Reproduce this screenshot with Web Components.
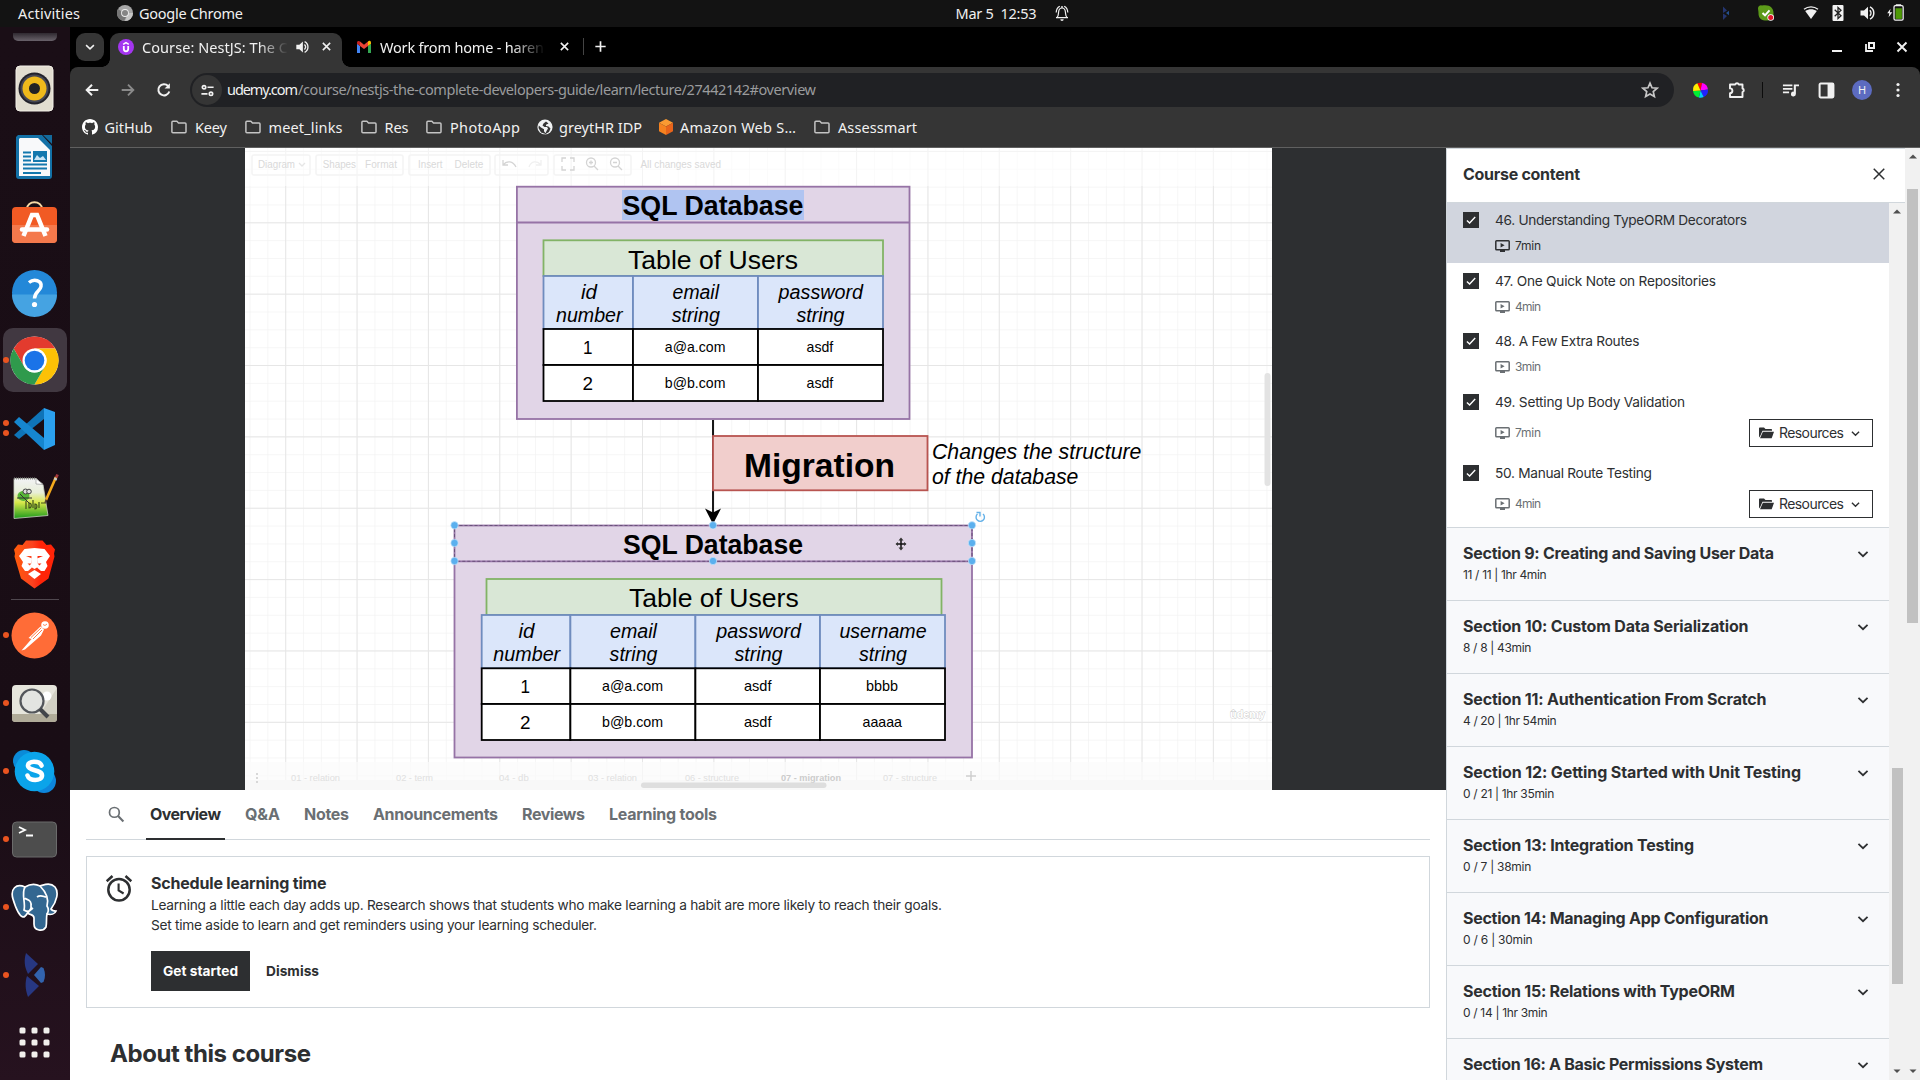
<!DOCTYPE html>
<html lang="en">
<head>
<meta charset="utf-8">
<title>Course: NestJS: The Complete Developer's Guide</title>
<style>
html,body{margin:0;height:100%;overflow:hidden;background:#000}
</style>
</head>
<body>
<desk-top></desk-top>
<script>
const UI = '"Noto Sans","Open Sans",sans-serif';
const PAGE = 'Inter,"Liberation Sans",sans-serif';

function component(tag, render, after) {
  customElements.define(tag, class extends HTMLElement {
    connectedCallback() {
      if (this.shadowRoot) return;
      const root = this.attachShadow({ mode: 'open' });
      const t = document.createElement('template');
      t.innerHTML = typeof render === 'function' ? render(this) : render;
      root.appendChild(t.content.cloneNode(true));
      if (after) after(this);
    }
  });
}

/* ---------- icons ---------- */
const S = 'fill="none" stroke="currentColor"';
const ICONS = {
  down: ['0 0 16 16', `<path ${S} stroke-width="2" d="M2.800 5.500 8 10.500l5.200-5"/>`],
  close: ['0 0 16 16', `<path ${S} stroke-width="1.9" d="M3.5 3.5l9 9m0-9l-9 9"/>`],
  thinclose: ['0 0 16 16', `<path ${S} stroke-width="1.7" d="M2 2l12 12m0-12L2 14"/>`],
  plus: ['0 0 16 16', `<path ${S} stroke-width="1.8" d="M8 2.5v11M2.5 8h11"/>`],
  udemy: ['0 0 16 16', `<circle cx="8" cy="8" r="8" fill="#a435f0"/><path d="M5.2 5.3 8 3.6l2.8 1.7" fill="none" stroke="#fff" stroke-width="1.5"/><path d="M5.8 7v3.1a2.2 2.2 0 0 0 4.4 0V7" fill="none" stroke="#fff" stroke-width="1.8"/>`],
  speaker: ['0 0 16 16', `<path fill="currentColor" d="M1.5 5.5v5H5l4 3.8V1.7L5 5.5z"/><path ${S} stroke-width="1.5" d="M10.8 5.2a4 4 0 0 1 0 5.6M11 1.9a6.8 6.8 0 0 1 0 12.2"/>`],
  gmail: ['0 0 16 16', `<path fill="#4285f4" d="M1 14h3V7L1 4.8z"/><path fill="#34a853" d="M12 14h3V4.8L12 7z"/><path fill="#fbbc04" d="M12 3v4l3-2.2V3.6c0-1.6-1.8-2.3-3-1.2z"/><path fill="#ea4335" d="M4 7V2.6l4 3.1 4-3.1V7l-4 3z"/><path fill="#c5221f" d="M1 3.6v1.2L4 7V2.6C2.800 1.400 1 2 1 3.600z"/>`],
  back: ['0 0 16 16', `<path ${S} stroke-width="2" d="M14.300 8H3M8 2.700 2.700 8 8 13.300"/>`],
  fwd: ['0 0 16 16', `<path ${S} stroke-width="1.900" d="M1.700 8H13M8 2.700 13.300 8 8 13.300"/>`],
  reload: ['0 0 16 16', `<path ${S} stroke-width="2" d="M13.300 9.500A5.600 5.600 0 1 1 12.100 4"/><path fill="currentColor" d="M13.900 1.200v5.300H8.600z"/>`],
  tune: ['0 0 16 16', `<g ${S} stroke-width="1.800"><circle cx="4.300" cy="4.500" r="1.800"/><path d="M8 4.500h6.500M1.500 11.500H8"/><circle cx="11.700" cy="11.500" r="1.800"/></g>`],
  star: ['0 0 16 16', `<path ${S} stroke-width="1.500" d="M8 1.900l1.800 4.100 4.500.4-3.400 3 1 4.400L8 11.500l-3.900 2.300 1-4.400-3.400-3 4.500-.4z"/>`],
  puzzle: ['0 0 18 18', `<path ${S} stroke-width="1.900" stroke-linejoin="round" d="M2 3.500h5.200a1.900 1.900 0 0 1 3.600 0H14.500V7.500a1.900 1.900 0 0 1 0 3.600V16H2v-3.800a2.400 2.400 0 0 0 0-4.800z"/>`],
  queue: ['0 0 18 18', `<path ${S} stroke-width="1.900" d="M1 3.500h10M1 7.300h10M1 11h6.500"/><path fill="currentColor" d="M12.500 2.600H18v2h-3.300v8.200a2.600 2.600 0 1 1-2.200-2.600z"/>`],
  panel: ['0 0 16 16', `<rect x="1.500" y="1.500" width="13" height="13" rx="1" ${S} stroke-width="1.900"/><path fill="currentColor" d="M9 1.500h5.500v13H9z"/>`],
  more: ['0 0 16 16', `<g fill="currentColor"><circle cx="8" cy="2.500" r="1.600"/><circle cx="8" cy="8" r="1.600"/><circle cx="8" cy="13.500" r="1.600"/></g>`],
  folder: ['0 0 16 16', `<path ${S} stroke-width="1.500" stroke-linejoin="round" d="M.9 3.300c0-.6.3-1 1-1h4L7.500 4H14c.7 0 1 .4 1 1v7.700c0 .6-.4 1-1 1H1.900c-.7 0-1-.4-1-1z"/>`],
  github: ['0 0 16 16', `<path fill="currentColor" d="M8 0C3.580 0 0 3.580 0 8c0 3.540 2.290 6.530 5.470 7.590.4.070.55-.17.55-.38 0-.19-.01-.82-.01-1.490-2.010.37-2.530-.49-2.690-.94-.09-.23-.48-.94-.82-1.130-.28-.15-.68-.52-.01-.53.63-.01 1.080.58 1.230.82.72 1.210 1.870.87 2.330.66.070-.52.28-.87.51-1.070-1.780-.2-3.640-.89-3.640-3.950 0-.87.31-1.590.82-2.150-.08-.2-.36-1.020.08-2.120 0 0 .67-.21 2.200.82.64-.18 1.320-.27 2-.27s1.360.09 2 .27c1.530-1.040 2.200-.82 2.200-.82.44 1.100.16 1.920.08 2.120.51.56.82 1.270.82 2.150 0 3.070-1.870 3.750-3.650 3.950.29.25.54.73.54 1.480 0 1.070-.01 1.930-.01 2.200 0 .21.15.46.55.38A8.010 8.010 0 0 0 16 8c0-4.420-3.580-8-8-8z"/>`],
  globe: ['0 0 16 16', `<circle cx="8" cy="8" r="7.600" fill="#f1f3f4"/><path fill="#353535" d="M9 2.500 6.500 4.500l-1 2 2 1.500h2.500l1 1.500-1.500 2.500-1 2.300-1.500-2v-2L4 8.500 1.800 6.500 1.500 9l2.500 4.500 4 1.300L7 16l5-3 1.500-3.500-2-2-2.500-.5V5.800l2.500-1.300z"/>`],
  cube: ['0 0 16 16', `<path fill="#fa9a32" d="M8 0l7 3.700L8 7.500 1 3.700z"/><path fill="#f58220" d="M1 3.700l7 3.800V16l-7-3.800z"/><path fill="#e8641b" d="M15 3.700 8 7.500V16l7-3.800z"/>`],
  bell: ['0 0 16 16', `<path ${S} stroke-width="1.200" d="M3 12.500c1.500-1.500 1.300-3 1.600-5.500C4.800 4.700 6.200 3 8 3s3.200 1.700 3.400 4c.3 2.500.1 4 1.600 5.500M2.200 7.500C2.300 5 3.500 2.300 5.800 1.200M13.800 7.500c-.1-2.500-1.300-5.200-3.600-6.300"/><path fill="currentColor" d="M2 12h12v1.300H2zM6.300 14.200h3.400a1.700 1.700 0 0 1-3.400 0zM7.300 1h1.400v2H7.300z"/>`],
  chromegrey: ['0 0 16 16', `<circle cx="8" cy="8" r="8" fill="#a6a6a6"/><path d="M1 4a8 8 0 0 0 6 12l3-6z" fill="#767676"/><path d="M16 8a8 8 0 0 1-8 8l3.500-8z" fill="#c6c6c6"/><circle cx="8" cy="8" r="3.900" fill="#eee"/><circle cx="8" cy="8" r="3" fill="#858585"/>`],
  kitesmall: ['0 0 16 16', `<path fill="#24356f" d="M5 1.500 9 5.500 5 8zM5 8.500 9 11 5 15z"/><path fill="#24508f" d="M8 8l3-2.300v4.600z"/>`],
  skypeok: ['0 0 16 16', `<path d="M0 3a3 3 0 0 1 4-2.500C12-1 16 3 15.500 9.500 15 14 11 16 7 15.500 2 15 .5 12 .5 8 .5 6 0 5 0 3z" fill="#5c9a19"/><path d="M4.500 8l2.500 2.300 4.500-5" fill="none" stroke="#fff" stroke-width="2"/><circle cx="12.700" cy="12.500" r="3.300" fill="#fff"/><circle cx="12.700" cy="12.500" r="2.500" fill="#e0162b"/>`],
  wifi: ['0 0 16 16', `<path ${S} stroke-width="1.300" d="M1 4.200c4-3.200 10-3.200 14 0"/><path fill="currentColor" d="M2.200 6C6 3.600 10 3.600 13.800 6L8 14z"/>`],
  bt: ['0 0 12 16', `<rect x=".5" width="11" height="16" rx="1" fill="#f2f2f2"/><path fill="none" stroke="#222" stroke-width="1.300" d="M2.700 4.800l6.300 6L6 13.500v-11L9 5.200l-6.300 6"/>`],
  battery: ['0 0 16 16', `<path fill="#f2f2f2" d="M3.300 4.500.2 8.800h2L1.500 12.400 5 7.700H2.700zM8.300.2h5v1.500h-5z"/><rect x="6.600" y="1.600" width="8.600" height="13.600" rx="1.300" fill="none" stroke="#f2f2f2" stroke-width="1.200"/><path fill="#4e9a06" d="M8 4h6v10H8z"/>`],
  min: ['0 0 16 16', `<path fill="currentColor" d="M3 11h10v2H3z"/>`],
  restore: ['0 0 16 16', `<path ${S} stroke-width="2" d="M7 4h5v5H7z"/><path ${S} stroke-width="1.800" d="M4 5v7h7"/>`],
  wheel: ['0 0 16 16', `<path fill="#f00" d="M8 8 5 1.200A7 7 0 0 1 9.500 1z"/><path fill="#f0f" d="M8 8 9.500 1a7 7 0 0 1 5.500 6z"/><path fill="#22f" d="M8 8l7-1a7 7 0 0 1-4 7.200z"/><path fill="#0cf" d="M8 8l3 6.200a7 7 0 0 1-4.500.500z"/><path fill="#0e3" d="M8 8l-1.500 6.700A7 7 0 0 1 1 8.500z"/><path fill="#fe0" d="M8 8l-7 .5a7 7 0 0 1 4-7.300z"/>`],
  search: ['0 0 16 16', `<circle cx="6" cy="6" r="4.600" ${S} stroke-width="1.600"/><path ${S} stroke-width="2" d="M9.500 9.500l5 5"/>`],
  alarm: ['0 0 28 28', `<g ${S} stroke-width="2.500"><circle cx="14" cy="15.700" r="10.700"/><path d="M1.700 7.200 7.500 2M26.300 7.200 20.500 2"/><path stroke-width="2.100" d="M13.600 9.500v7l5 3"/></g>`],
  check: ['0 0 16 16', `<path fill="#2d2f31" d="M0 0h16v16H0z"/><path fill="none" stroke="#fff" stroke-width="1.400" d="M3.900 8.500l2.700 2.500 5.600-6"/>`],
  video: ['0 0 15 12', `<rect x=".8" y=".8" width="13.400" height="9" rx=".8" ${S} stroke-width="1.500"/><path fill="currentColor" d="M5.600 3v4.600l4-2.300zM5 10h5v2H5z"/>`],
  open: ['0 0 15 12', `<path fill="currentColor" d="M0 1.500C0 .8.500.5 1 .5h4L6.500 2H12c.7 0 1 .3 1 1v.7H3.500L1.200 9 0 10.500z"/><path fill="currentColor" d="M3.900 4.700H15L12.700 11.300H1z"/>`],
};
component('svg-icon', el => {
  const [vb, body] = ICONS[el.getAttribute('name')];
  const w = el.getAttribute('w') || 16, h = el.getAttribute('h') || w;
  return `<style>:host{display:block;flex:none;width:${w}px;height:${h}px}svg{display:block}</style><svg width="${w}" height="${h}" viewBox="${vb}">${body}</svg>`;
});

/* ---------- GNOME top bar ---------- */
component('top-bar', `<style>
:host{display:flex;height:27px;background:#131313;color:#f0f0f0;font:14.500px/24px ${UI};align-items:center;padding:0 16px 2px 18px;box-sizing:border-box}
.l,.c,.r{display:flex;align-items:center}
.l{width:937.500px;gap:0}.l svg-icon{margin:0 6px 0 37px}
.c{gap:17px}.r{flex:1;justify-content:flex-end}
</style>
<div class="l"><fit-text w="62">Activities</fit-text><svg-icon name="chromegrey"></svg-icon><fit-text w="104">Google Chrome</fit-text></div>
<div class="c"><fit-text w="81">Mar 5  12:53</fit-text><svg-icon name="bell"></svg-icon></div>
<div class="r"><svg-icon name="kitesmall" style="margin-right:24px"></svg-icon><svg-icon name="skypeok" style="margin-right:29px"></svg-icon><svg-icon name="wifi" style="margin-right:13px"></svg-icon><svg-icon name="bt" w="12" h="16" style="margin-right:15px"></svg-icon><svg-icon name="speaker" style="margin-right:12px"></svg-icon><svg-icon name="battery" w="17"></svg-icon></div>`);

/* ---------- dock ---------- */
const DOCK = {
  speaker: `<rect x="6" y="2" width="37" height="45" rx="4" fill="#e2ddd0" stroke="#f3f0e8"/><circle cx="24.500" cy="24.500" r="16" fill="#23222b"/><circle cx="24.500" cy="24.500" r="14" fill="#464754"/><circle cx="24.500" cy="24.500" r="12" fill="#efb91b"/><circle cx="24.500" cy="24.500" r="5.500" fill="#202124"/>`,
  writer: `<path d="M8 3h24l10 11v30a3 3 0 0 1-3 3H9a3 3 0 0 1-3-3V5z" fill="#1371a7"/><path d="M10 6h18l12 12v26H9V7z" fill="#f8f9fa"/><path d="M33 3h9v9z" fill="#136a9c"/><path d="M13 20.500h8M13 24.500h8M13 28.500h8M13 32.500h24M13 36.500h24M13 41h18" stroke="#1378ad" stroke-width="2"/><path d="M23 19h14v11H23z" fill="#1378ad"/><path d="M24 28l3-5 3 3 3-2 3 4z" fill="#c9e5f5"/>`,
  software: `<path d="M17 9c0-9 15-9 15 0" fill="none" stroke="#f7d8a5" stroke-width="2"/><rect x="2" y="7" width="45" height="36" rx="4" fill="#f15a24"/><path d="M2 25h45v14a4 4 0 0 1-4 4H6a4 4 0 0 1-4-4z" fill="#f4794c"/><path d="M13.500 36 22 15h5l8.500 21" fill="none" stroke="#fff" stroke-width="4.500"/><path d="M12 29.500h25" stroke="#fff" stroke-width="4.500" stroke-linecap="round"/>`,
  help: `<circle cx="24.500" cy="24.500" r="22.500" fill="#2388d8"/><path d="M2 26.500a22.500 22.500 0 0 0 45 0z" fill="#45a3e2"/><path d="M19 14.500c5-4 13-2 12 4-.6 4.500-6.500 5-6.500 12" fill="none" stroke="#fff" stroke-width="3.500"/><circle cx="24.500" cy="36.500" r="2.600" fill="#fff"/>`,
  chrome: `<circle cx="24.500" cy="24.500" r="24" fill="#fff"/><path d="M3.700 12.500a24 24 0 0 1 41.600 0H24.500L14 30.500z" fill="#e33b2e"/><path d="M45.300 12.500a24 24 0 0 1-20.800 36l10.400-18a12 12 0 0 0-10.400-18z" fill="#fcc106"/><path d="M3.700 12.500a24 24 0 0 0 20.800 36l10.400-18a12 12 0 0 1-20.800 0z" fill="#2f9a4c"/><circle cx="24.500" cy="24.500" r="12" fill="#fff"/><circle cx="24.500" cy="24.500" r="9.800" fill="#1a73e8"/>`,
  vscode: `<path d="M34 4 4 31l5 4L34 15z" fill="#0f74b8"/><path d="M34 46 4 18l5-5 25 21z" fill="#1686cf"/><path d="M34 4l11 4v33l-11 5z" fill="#2ba0ee"/>`,
  notepad: `<defs><linearGradient id="g" x2="0" y2="1"><stop stop-color="#f2f2f5"/><stop offset=".35" stop-color="#e8eed8"/><stop offset=".6" stop-color="#d8e84a"/><stop offset="1" stop-color="#1c9a1c"/></linearGradient></defs><path d="M4 6.500h22l7 6 5 31L4 46.500z" fill="url(#g)" stroke="#c9d0c0" stroke-width=".8"/><path d="M4 6.500h22" stroke="#888" stroke-width="2" stroke-dasharray="1 1"/><path d="M26 6.500v5.500l7 .5z" fill="#fff" stroke="#888" stroke-width=".6"/><ellipse cx="13.500" cy="24" rx="6" ry="5" fill="#56b637"/><circle cx="15.500" cy="19.500" r="2.500" fill="#ddd" stroke="#444"/><circle cx="19" cy="19.500" r="2.300" fill="#ddd" stroke="#444"/><path d="M7 26h15M10 22l9 9" stroke="#333" stroke-width="1" fill="none"/><path d="M16 29v8M19 31c3 0 3 5 0 5zM23 28v8M25 32c3 0 2 5 0 5zM29 30v6M31 31h5" stroke="#41511d" stroke-width="1.200" fill="none"/><path d="M46 5 36 28" stroke="#f4a91c" stroke-width="2.600"/><path d="M47.500 2.500 46.300 5.500" stroke="#a3383d" stroke-width="2.800"/><path d="M46 6l-1 2" stroke="#ccc" stroke-width="3"/><path d="M36 27.500l-1 3.500" stroke="#5a4632" stroke-width="1.300"/>`,
  brave: `<defs><linearGradient id="b"><stop stop-color="#ff5c0a"/><stop offset=".45" stop-color="#fb4220"/><stop offset=".65" stop-color="#ff2408"/></linearGradient></defs><path d="M16 .5h16.500l4 4.500 4.500-.5 4 5-1 4 .5 3-6 22L24.500 48.500 11 38.500 4.500 16.500 5 13.500l-1-4 4-5 4.500.5z" fill="url(#b)"/><path d="M14.500 9 24.500 8l10 1 5.500 7-4 6 1.500 4-3 5h-3.500l-4-3.500 4.500-4h-4l-.5-5 6-2.500-5.500 0-3 1.500-3-1.500h-5.500l6 2.500-.5 5h-4l4.500 4-4 3.500H15l-3.500-5L13 22l-4-6z" fill="#fff"/><path d="M21.500 16h6v7l2 3-5 3-5-3 2-3z" fill="#fff"/><path d="M24.500 30l6.500 4-6.500 5-6.500-5z" fill="#fff"/>`,
  postman: `<circle cx="24.500" cy="24.500" r="23" fill="#ff6c37"/><circle cx="35" cy="14" r="3.800" fill="#fff"/><path d="M30.500 15.500 18.500 27l3 1-10 11.500 3.500-1L31 24.500l3-6z" fill="#fff"/><path d="M21 26.500 31 17M23 28l9-9" stroke="#ff6c37" stroke-width=".9"/><path d="M33 13.500l2 1 2-1.500" stroke="#ff6c37" stroke-width=".8" fill="none"/>`,
  viewer: `<rect x="2" y="6" width="45" height="37" rx="4" fill="#e6e5dc"/><path d="M2 35h45v5a3 3 0 0 1-3 3H5a3 3 0 0 1-3-3z" fill="#b0ab99"/><path d="M47 9 30 35h17z" fill="#d2d0c4"/><circle cx="37" cy="17" r="4.500" fill="#fff"/><circle cx="22" cy="22" r="11.500" fill="#e3e4e1" stroke="#53565b" stroke-width="2.200"/><path d="M30 30l8 8" stroke="#42454a" stroke-width="4"/>`,
  skype: `<circle cx="14" cy="14" r="11" fill="#0b8bd8"/><circle cx="34" cy="34" r="12" fill="#0d86dc"/><circle cx="24.500" cy="24.500" r="19.800" fill="#0ba4ea"/><path d="M31.500 18.500c-2-5-14-5-13.500.5.500 5 14 3.500 14 9.500s-13 6-14.500 0" fill="none" stroke="#fff" stroke-width="4.600" stroke-linecap="round"/>`,
  terminal: `<rect x="2.500" y="7" width="44" height="35" rx="4" fill="#4d4d4d" stroke="#6b6b6b"/><path d="M9 12l6 3-6 3M16 20.500h7" fill="none" stroke="#fff" stroke-width="1.800"/>`,
  postgres: `<path d="M15 4C6 0 0 6 3 16c3 10 6 17 10 18 2 0 4-3 5-5l1 2c3 1 5 1 5 4v6c0 7 9 8 12 3 1-4 0-9 1-13 4 1 8 0 9-3-2 0-4 0-5-2 6-8 8-17 4-22-5-5-11-2-15-1-4-2-10-2-15 1z" fill="#336791" stroke="#fff" stroke-width="1.700"/><path d="M15 4c-4 7 1 16-1 23 4 3 8 0 7-4 1-7-5-6-6-8M30 3c6 6 9 13 7 20 2 3 2 5 0 8M27 14c4-3 7 0 9 0M18 29l5-4" fill="none" stroke="#fff" stroke-width="1.700"/>`,
  kite: `<path d="M16 2 28 13 18 23c-4-8-4-14-2-21z" fill="#273782"/><path d="M17 25 29 35 18 46c-3-8-3-15-1-21z" fill="#273782"/><path d="M24 24l7-8 2.500 1c2 5 2 9 0 14L31 32z" fill="#3263ad"/>`,
  apps: `<g fill="#f0efec">${[9.5,21.5,33.5].map(y => [9.5,21.5,33.5].map(x => `<rect x="${x}" y="${y}" width="6" height="6" rx="1.500"/>`).join('')).join('')}</g>`
};
component('dock-item', el => {
  const dots = +el.getAttribute('dots') || 0;
  return `<style>
:host{display:flex;position:relative;height:68px;align-items:center;justify-content:center}
div{width:64px;height:64px;border-radius:10px;display:flex;align-items:center;justify-content:center;${el.hasAttribute('active') ? 'background:#413841' : ''}}
svg{margin-right:1px}
p{position:absolute;left:3px;top:0;height:68px;margin:0;display:flex;flex-direction:column;justify-content:center;gap:3.500px}
i{width:6px;height:6px;border-radius:50%;background:#e95420}</style>
<div><svg width="49" height="49" viewBox="0 0 49 49">${DOCK[el.getAttribute('name')]}</svg></div><p>${'<i></i>'.repeat(dots)}</p>`;
});
component('side-dock', `<style>
:host{display:flex;flex-direction:column;width:70px;flex:none;background:linear-gradient(#1a0e16 0,#190d15 70%,#26121f 100%)}
.cut{height:27px;padding:6px 13px 0;box-sizing:border-box}.cut b{display:block;height:8px;background:linear-gradient(#2f2930,#69626a);border-radius:0 0 5px 5px}
hr{width:48px;height:1px;border:0;margin:1px auto 1px;background:#50484f}
</style><div class="cut"><b></b></div>
<dock-item name="speaker"></dock-item><dock-item name="writer"></dock-item><dock-item name="software"></dock-item><dock-item name="help"></dock-item><dock-item name="chrome" active dots="1"></dock-item><dock-item name="vscode" dots="2"></dock-item><dock-item name="notepad"></dock-item><dock-item name="brave"></dock-item><hr>
<dock-item name="postman" dots="1"></dock-item><dock-item name="viewer" dots="1"></dock-item><dock-item name="skype" dots="1"></dock-item><dock-item name="terminal" dots="1"></dock-item><dock-item name="postgres" dots="1"></dock-item><dock-item name="kite" dots="1"></dock-item><dock-item name="apps" style="height:66px"></dock-item>`);

/* ---------- browser chrome ---------- */
component('tab-strip', `<style>
:host{display:flex;height:40px;background:#000;color:#f1f1f1;font:14.500px/24px ${UI};padding:0 10px 0 6px;box-sizing:border-box;align-items:center}
.menu{width:28px;height:28px;border-radius:9px;background:#353535;display:grid;place-items:center}
.tab{display:flex;align-items:center;height:34px;margin-top:6px;box-sizing:border-box;padding-bottom:7px}
.on{width:232px;margin-left:6px;padding-left:8px;background:#353535;border-radius:9px 9px 0 0;position:relative}
.on::before,.on::after{content:"";position:absolute;bottom:0;width:8px;height:8px;background:radial-gradient(circle at 0 0,#0000 7.500px,#353535 8px)}
.on::before{left:-8px}.on::after{right:-8px;background:radial-gradient(circle at 100% 0,#0000 7.500px,#353535 8px)}
.t{overflow:hidden;white-space:nowrap;-webkit-mask:linear-gradient(90deg,#000 80%,#0000);mask:linear-gradient(90deg,#000 80%,#0000);margin-left:8px}
.off{padding-left:14px}.sep{width:1px;height:17px;background:#444;margin:0 9px 0 12px}
.win{margin-left:auto;display:flex;gap:16.500px}
</style>
<div class="menu"><svg-icon name="down" w="12"></svg-icon></div>
<div class="tab on"><svg-icon name="udemy"></svg-icon><div class="t" style="width:146px"><fit-text w="146">Course: NestJS: The C</fit-text></div><svg-icon name="speaker" w="14" style="margin-left:7px"></svg-icon><svg-icon name="close" w="13" style="margin-left:10.500px"></svg-icon></div>
<div class="tab off"><svg-icon name="gmail" w="16"></svg-icon><div class="t" style="width:165px"><fit-text w="164">Work from home - haren</fit-text></div><svg-icon name="close" w="13" style="margin-left:12.500px"></svg-icon><span class="sep"></span><svg-icon name="plus" w="15"></svg-icon></div>
<div class="win"><svg-icon name="min"></svg-icon><svg-icon name="restore"></svg-icon><svg-icon name="close"></svg-icon></div>`);

component('nav-bar', `<style>
:host{display:flex;height:46px;box-sizing:border-box;align-items:center;background:#353535;color:#f1f1f1;border-radius:8px 8px 0 0;padding:0 14px;font:14.500px/32px ${UI}}
.box{flex:none;width:1484px;height:34px;margin-left:18px;border-radius:17px;background:#202124;display:flex;align-items:center;padding:0 15px 0 2px;box-sizing:border-box}
.c{width:30px;height:30px;border-radius:50%;background:#353535;display:grid;place-items:center;margin-right:5px}
.path{color:#9a9b9d}.box svg-icon[name=star]{margin-left:auto;color:#c7c7c7}
.box fit-text{margin-bottom:2px}
.sep{width:2px;height:16px;background:#0c0c0c;margin:0 19px 0 16px}
.av{width:20px;height:20px;border-radius:50%;background:#5c6bc0;font:11px/20px ${UI};text-align:center;margin:0 26px 0 26px;flex:none}
</style>
<svg-icon name="back"></svg-icon><svg-icon name="fwd" style="margin-left:20px;color:#8a8a8a"></svg-icon><svg-icon name="reload" style="margin-left:20px"></svg-icon>
<div class="box"><div class="c"><svg-icon name="tune" w="15"></svg-icon></div><fit-text w="71">udemy.com</fit-text><fit-text w="518" class="path">/course/nestjs-the-complete-developers-guide/learn/lecture/27442142#overview</fit-text><svg-icon name="star" w="18"></svg-icon></div>
<svg-icon name="wheel" w="17" style="margin-left:17.500px"></svg-icon><svg-icon name="puzzle" w="18" style="margin-left:19px"></svg-icon><span class="sep"></span><svg-icon name="queue" w="17"></svg-icon><svg-icon name="panel" w="17" style="margin-left:19px"></svg-icon><div class="av" style="margin-left:17px;margin-right:18px">H</div><svg-icon name="more" w="16"></svg-icon>`);

component('book-mark', el => `<style>:host{display:flex;align-items:center;color:#f1f1f1;font:14.500px/24px ${UI};margin-right:${el.getAttribute('gap')}px}svg-icon{color:#c4c4c4;margin-right:${el.getAttribute('pad') || 8}px}svg-icon[name=github]{color:#fff}</style><svg-icon name="${el.getAttribute('icon') || 'folder'}" w="16"></svg-icon><fit-text w="${el.getAttribute('w')}">${el.getAttribute('label')}</fit-text>`);
component('bookmark-bar', `<style>:host{display:flex;height:35px;box-sizing:border-box;align-items:center;background:#353535;border-bottom:1px solid #606060;padding:0 0 7px 12px}</style>
<book-mark icon="github" label="GitHub" w="48" pad="6.500" gap="18.500"></book-mark><book-mark label="Keey" w="32" gap="17.500"></book-mark><book-mark label="meet_links" w="74" gap="18"></book-mark><book-mark label="Res" w="24" gap="17.500"></book-mark><book-mark label="PhotoApp" w="70" gap="16.500"></book-mark><book-mark icon="globe" label="greytHR IDP" w="83" pad="6.500" gap="15.500"></book-mark><book-mark icon="cube" label="Amazon Web S…" w="116" pad="6.500" gap="18"></book-mark><book-mark label="Assessmart" w="79" gap="0"></book-mark>`);

/* ---------- diagram shown in the video ---------- */
const tx = (x1, x2, y, size, s, extra = '') => `<text x="${x1}" y="${y}" font-size="${size}" textLength="${(x2 - x1).toFixed(1)}" lengthAdjust="spacingAndGlyphs" ${extra}>${s}</text>`;
const box = (x1, y1, x2, y2, fill, stroke, w = 1.800) => `<rect x="${x1}" y="${y1}" width="${x2 - x1}" height="${y2 - y1}" fill="${fill}" stroke="${stroke}" stroke-width="${w}"/>`;
const grid = (cols, y1, y2, fill, stroke) => cols.slice(1).map((c, i) => box(cols[i], y1, c, y2, fill, stroke)).join('');
const IT = 'font-style="italic"', BD = 'font-weight="bold"';
component('lecture-video', () => {
  const a = [543.500, 633, 758, 883], b = [481.700, 570.400, 695.400, 820, 945];
  const P = '#e1d5e7', PS = '#9673a6', HB = '#dbe6fa', HS = '#6f8cbe', K = '#000';
  const faint = 'fill="#d9d9d9"', tabs = 'fill="#e0e0e0"';
  return `<style>:host{display:flex;height:642px;background:#2d2f31;padding-left:175px;box-sizing:border-box}svg{display:block;flex:none}</style>
<svg width="1027" height="642" viewBox="245 148 1027 642" font-family="'Liberation Sans',Arial,sans-serif">
<defs>
<pattern id="mi" width="17.840" height="17.840" patternUnits="userSpaceOnUse" x="285.200" y="222.300"><path d="M0 0H17.840M0 0V17.840" stroke="#f3f3f3" stroke-width="1.500" fill="none"/></pattern>
<pattern id="ma" width="71.360" height="71.360" patternUnits="userSpaceOnUse" x="285.200" y="222.300"><path d="M0 0H71.360M0 0V71.360" stroke="#e6e6e6" stroke-width="2" fill="none"/></pattern>
</defs>
<path d="M245 148h1027v642H245z" fill="#fff"/><path d="M245 148h1027v634H245z" fill="url(#mi)"/><path d="M245 148h1027v634H245z" fill="url(#ma)"/>
<path d="M245 148h1027v38H245z" fill="#fff" opacity=".55"/><path d="M245 762h1027v28H245z" fill="#fbfbfb" opacity=".7"/><path d="M245 780h1027v10H245z" fill="#f8f8f8"/>
<g fill="none" stroke="#f4f4f4" stroke-width="1.500"><rect x="252" y="155" width="58" height="20" rx="2"/><rect x="316" y="155" width="87" height="20" rx="2"/><rect x="409" y="155" width="81" height="20" rx="2"/><rect x="495" y="155" width="53" height="20" rx="2"/><rect x="554" y="155" width="77" height="20" rx="2"/></g>
${tx(258, 295, 167.500, 10, 'Diagram', faint)}${tx(322.700, 356, 167.500, 10, 'Shapes', faint)}${tx(365, 397, 167.500, 10, 'Format', faint)}${tx(418, 442.500, 167.500, 10, 'Insert', faint)}${tx(454.400, 483.400, 167.500, 10, 'Delete', faint)}${tx(640.400, 721, 168, 10, 'All changes saved', faint)}
<g fill="none" stroke="#d4d4d4" stroke-width="1.300"><path d="M299 163l3 3 3-3" stroke="#e6e6e6"/><path d="M503 160v5h5M503 165c4-5 10-4 13 2"/><path stroke="#f0f0f0" d="M541 160v5h-5M541 165c-4-5-10-4-12 2"/><path d="M562 162v-4h4M570 158h4v4M574 166v4h-4M566 170h-4v-4"/><circle cx="591" cy="162.500" r="4.500"/><path d="M594 166l4 4M589 162.500h4M591 160.500v4"/><circle cx="615" cy="162.500" r="4.500"/><path d="M618 166l4 4M613 162.500h4"/></g>
${box(516.900, 186.700, 909.500, 419, P, PS)}<path d="M516.900 222.500H909.500" stroke="${PS}" stroke-width="1.800"/>
<path d="M622 190h182v30H622z" fill="#b0c4f1"/>
${tx(622.500, 803.500, 215, 27, 'SQL Database', BD)}
${box(543.500, 240.300, 883, 276, '#d9e7d6', '#82b366')}${tx(628, 798, 268.700, 26, 'Table of Users')}
${grid(a, 276, 329, HB, HS)}${grid(a, 329, 365, '#fff', K)}${grid(a, 365, 401, '#fff', K)}
${tx(581, 597, 299, 20.500, 'id', IT)}${tx(556, 622.500, 322, 20.500, 'number', IT)}${tx(672.600, 719, 299, 20.500, 'email', IT)}${tx(671.700, 720, 322, 20.500, 'string', IT)}${tx(778.600, 863, 299, 20.500, 'password', IT)}${tx(796.500, 844.500, 322, 20.500, 'string', IT)}
${tx(583, 592.500, 354, 18, '1')}${tx(582.500, 593, 389.500, 18, '2')}
${tx(664.800, 725.400, 352.300, 14.500, 'a@a.com')}${tx(664.800, 725.400, 388, 14.500, 'b@b.com')}${tx(806.600, 833.300, 352.300, 14.500, 'asdf')}${tx(806.600, 833.300, 388, 14.500, 'asdf')}
<path d="M713 420V514" stroke="#000" stroke-width="1.800"/><path d="M713 524l-8-15.500 8 4 8-4z"/>
${box(713, 436, 927.500, 490.300, '#f1cecc', '#b85450')}${tx(744, 895, 476.700, 33, 'Migration', BD)}
${tx(932, 1141.400, 459.300, 21.500, 'Changes the structure', IT)}${tx(932, 1078.400, 484, 21.500, 'of the database', IT)}
${box(454.500, 525.500, 972, 757.500, P, PS)}<path d="M454.500 561.300H972" stroke="${PS}" stroke-width="1.800"/>
<path d="M454.500 525.500H972V561.300H454.500z" fill="none" stroke="#69537a" stroke-dasharray="3 2"/>
${tx(623, 803, 553.700, 27, 'SQL Database', BD)}
${box(486.500, 579, 941.500, 615, '#d9e7d6', '#82b366')}${tx(629, 798.700, 607, 26, 'Table of Users')}
${grid(b, 615, 668.300, HB, HS)}${grid(b, 668.300, 704, '#fff', K)}${grid(b, 704, 740, '#fff', K)}
${tx(518.500, 534.500, 637.700, 20.500, 'id', IT)}${tx(493.300, 560.200, 660.700, 20.500, 'number', IT)}${tx(610, 657, 637.700, 20.500, 'email', IT)}${tx(609.600, 657.500, 660.700, 20.500, 'string', IT)}${tx(716.300, 801, 637.700, 20.500, 'password', IT)}${tx(734.500, 782.500, 660.700, 20.500, 'string', IT)}${tx(839.400, 926.600, 637.700, 20.500, 'username', IT)}${tx(859, 907, 660.700, 20.500, 'string', IT)}
${tx(520.500, 530, 692.700, 18, '1')}${tx(520, 530.500, 728.500, 18, '2')}
${[['a@a.com', 'asdf', 691.3], ['b@b.com', 'asdf', 727.3]].map(r => tx(602, 663, r[2], 14.5, r[0]) + tx(744, 771.5, r[2], 14.5, r[1])).join('')}${tx(866, 898, 691.300, 14.500, 'bbbb')}${tx(862.500, 902, 727.300, 14.500, 'aaaaa')}
<g fill="#5bb0ee" stroke="#d5ecfb" stroke-width=".6">${[[454.5,525.3],[713,525.3],[972,525.3],[454.5,543],[972,543],[454.5,561],[713,561],[972,561]].map(p => `<circle cx="${p[0]}" cy="${p[1]}" r="3.700"/>`).join('')}</g>
<path d="M977.500 514a4.200 4.200 0 1 0 5.500 0M976.500 512.500h3.500v4" fill="none" stroke="#64b1e8" stroke-width="1.400"/>
<path d="M901 539v10M896.500 544h9" stroke="#111" stroke-width="1.500"/><path d="M901 537.500l2.500 3h-5zM901 550.500l2.500-3h-5zM895.500 544l2.500-2v4zM906.500 544l-2.500-2v4z" fill="#333"/>
<text x="1230" y="718" font-size="11.500" textLength="35" lengthAdjust="spacingAndGlyphs" fill="#fff" stroke="#c4c4c4" stroke-width=".8" paint-order="stroke" font-weight="bold">ûdemy</text>
<rect x="1264.500" y="373" width="6" height="113" rx="3" fill="#e3e3e3"/>
<g>${tx(291, 340, 780.500, 9.500, '01 - relation', tabs)}${tx(396, 433, 780.500, 9.500, '02 - term', tabs)}${tx(499, 528.700, 780.500, 9.500, '04 - db', tabs)}${tx(588, 637, 780.500, 9.500, '03 - relation', tabs)}${tx(685, 739, 780.500, 9.500, '06 - structure', tabs)}${tx(781, 841, 780.500, 9.500, '07 - migration', 'fill="#cccccc" font-weight="bold"')}${tx(883, 937, 780.500, 9.500, '07 - structure', tabs)}</g>
<path d="M971 771v10M966 776h10" stroke="#cfcfcf" stroke-width="1.500"/><path d="M257 773v10" stroke="#ccc" stroke-width="1.500" stroke-dasharray="2 2"/>
<rect x="641" y="782.500" width="185.500" height="5.500" rx="2.700" fill="#dedede"/>
</svg>`;
});

/* ---------- course page ---------- */
component('course-tabs', `<style>
:host{display:flex;height:49px;margin:0 16px;border-bottom:1px solid #d1d7dc;font:700 16px/48px ${PAGE};color:#6a6f73;gap:16px;padding-left:21.500px}
svg-icon{margin:16px 5.500px 0 0}
.t{padding:0 4px;height:48px}.on{color:#2d2f31;border-bottom:2px solid #2d2f31}
</style><svg-icon name="search" w="17"></svg-icon>
<div class="t on"><fit-text w="71">Overview</fit-text></div><div class="t"><fit-text w="35">Q&amp;A</fit-text></div><div class="t"><fit-text w="45">Notes</fit-text></div><div class="t"><fit-text w="125">Announcements</fit-text></div><div class="t"><fit-text w="63">Reviews</fit-text></div><div class="t"><fit-text w="108">Learning tools</fit-text></div>`);
component('schedule-card', `<style>
:host{display:flex;margin:16px 16px 0;height:152px;box-sizing:border-box;border:1px solid #d1d7dc;padding:16px 18px;color:#2d2f31;font:13.700px/20px ${PAGE}}
svg-icon{margin:1px 18px 0 0}
h3{font:700 16px/20px ${PAGE};margin:0 0 2px}p{margin:0}
.b{display:flex;align-items:center;gap:16px;margin-top:16px;font-weight:700}
.g{width:99px;height:40px;background:#2d2f31;color:#fff;display:grid;place-items:center}
</style><svg-icon name="alarm" w="28"></svg-icon><div><h3><fit-text w="175.500">Schedule learning time</fit-text></h3>
<p><fit-text w="791">Learning a little each day adds up. Research shows that students who make learning a habit are more likely to reach their goals.</fit-text></p><p><fit-text w="446">Set time aside to learn and get reminders using your learning scheduler.</fit-text></p>
<div class="b"><div class="g"><fit-text w="75">Get started</fit-text></div><fit-text w="53">Dismiss</fit-text></div></div>`);
component('course-main', `<style>:host{display:block;width:1376px;flex:none;background:#fff;overflow:hidden}h2{font:700 24px/30px ${PAGE};color:#2d2f31;margin:31px 0 0 40px}</style>
<lecture-video></lecture-video><course-tabs></course-tabs><schedule-card></schedule-card><h2><fit-text w="201">About this course</fit-text></h2>`);

component('lecture-row', el => {
  const res = el.hasAttribute('res'), cur = el.hasAttribute('current');
  return `<style>
:host{display:flex;height:${el.getAttribute('h')}px;box-sizing:border-box;padding:${cur ? 7 : 8}px 16px 0;color:#2d2f31;font:13.700px/20px ${PAGE};background:${cur ? '#d1d5de' : '#fff'}}
svg-icon[name=check]{margin:2px 16px 0 0}
.m{flex:1}.s{display:flex;align-items:center;font-size:12px;line-height:16px;color:${cur ? '#2d2f31' : '#6a6f73'};gap:5px;height:${res ? 28 : 16}px;margin-top:${res ? 7 : 8}px}
.r{margin-left:auto;width:124px;height:28px;box-sizing:border-box;border:1px solid #2d2f31;display:flex;align-items:center;padding:0 11px 0 9px;font-size:14px;color:#2d2f31}
</style><svg-icon name="check"></svg-icon><div class="m"><fit-text w="${el.getAttribute('w')}">${el.getAttribute('label')}</fit-text>
<div class="s"><svg-icon name="video" w="15" h="12"></svg-icon><fit-text w="26">${el.getAttribute('time')}</fit-text>${res ? '<div class="r"><svg-icon name="open" w="15" h="12" style="margin-right:5px"></svg-icon><fit-text w="65">Resources</fit-text><svg-icon name="down" w="11" style="margin-left:auto"></svg-icon></div>' : ''}</div></div>`;
});
component('section-row', el => `<style>
:host{display:flex;flex:none;height:73px;box-sizing:border-box;border-top:1px solid #d1d7dc;background:#f8f9fb;padding:15px 19px 0 16px;color:#2d2f31;justify-content:space-between;font:12px/16px ${PAGE}}
b{display:block;font:700 16px/20px ${PAGE};margin-bottom:4px}svg-icon{margin-top:4px}
</style><div><b><fit-text w="${el.getAttribute('w')}">${el.getAttribute('label')}</fit-text></b><fit-text w="${el.getAttribute('sw')}">${el.getAttribute('sub')}</fit-text></div><svg-icon name="down" w="14"></svg-icon>`);
component('scroll-bar', el => {
  const g = n => el.getAttribute(n);
  return `<style>:host{display:flex;flex-direction:column;align-items:center;width:${g('w')}px;flex:none;background:#f1f1f1;box-sizing:border-box}
svg{flex:none;display:block}i{flex:none;width:11px;height:${g('len')}px;margin-top:${g('at')}px;background:#c1c1c1}svg:last-child{margin-top:auto}</style><svg width="8" height="17" viewBox="0 0 8 17"><path d="M0 10.500 4 6.500l4 4z" fill="#505050"/></svg><i></i><svg width="8" height="17" viewBox="0 0 8 17"><path d="M.5 6.500h7L4 10z" fill="#505050"/></svg>`;
});
component('course-sidebar', `<style>
:host{display:flex;flex-direction:column;width:459px;flex:none;box-sizing:border-box;border-left:1px solid #d1d7dc;background:#fff;color:#2d2f31}
header{display:flex;flex:none;height:55px;box-sizing:border-box;border-top:1px solid #d1d7dc;border-bottom:1px solid #d1d7dc;align-items:center;justify-content:space-between;padding:0 19px 3px 16px;font:700 16px/20px ${PAGE}}
.b{display:flex;flex:1;min-height:0}.l{flex:1;overflow:hidden;display:flex;flex-direction:column}lecture-row{flex:none}
</style><header><fit-text w="117">Course content</fit-text><svg-icon name="thinclose" w="14"></svg-icon></header>
<div class="b"><div class="l">
<lecture-row current h="60" w="252" label="46. Understanding TypeORM Decorators" time="7min"></lecture-row>
<lecture-row h="60" w="221" label="47. One Quick Note on Repositories" time="4min"></lecture-row>
<lecture-row h="61" w="144.500" label="48. A Few Extra Routes" time="3min"></lecture-row>
<lecture-row res h="71" w="190" label="49. Setting Up Body Validation" time="7min"></lecture-row>
<lecture-row res h="72" w="157" label="50. Manual Route Testing" time="4min"></lecture-row>
<section-row w="311" label="Section 9: Creating and Saving User Data" sub="11 / 11 | 1hr 4min" sw="83.700"></section-row>
<section-row w="285.500" label="Section 10: Custom Data Serialization" sub="8 / 8 | 43min" sw="68.300"></section-row>
<section-row w="303.500" label="Section 11: Authentication From Scratch" sub="4 / 20 | 1hr 54min" sw="93.700"></section-row>
<section-row w="338" label="Section 12: Getting Started with Unit Testing" sub="0 / 21 | 1hr 35min" sw="91.300"></section-row>
<section-row w="231" label="Section 13: Integration Testing" sub="0 / 7 | 38min" sw="68.300"></section-row>
<section-row w="305.500" label="Section 14: Managing App Configuration" sub="0 / 6 | 30min" sw="69.700"></section-row>
<section-row w="272" label="Section 15: Relations with TypeORM" sub="0 / 14 | 1hr 3min" sw="84.700"></section-row>
<section-row w="300" label="Section 16: A Basic Permissions System" sub="" sw="1"></section-row>
</div><scroll-bar w="16" at="548" len="216"></scroll-bar></div>`);

component('browser-window', `<style>:host{display:flex;flex-direction:column;width:1850px;background:#000}.p{display:flex;flex:1;min-height:0;background:#fff}</style>
<tab-strip></tab-strip><nav-bar></nav-bar><bookmark-bar></bookmark-bar><div class="p"><course-main></course-main><course-sidebar></course-sidebar><scroll-bar w="15" at="24" len="434"></scroll-bar></div>`);
component('desk-top', `<style>:host{display:flex;flex-direction:column;width:1920px;height:1080px;overflow:hidden}.r{display:flex;flex:1;min-height:0}</style><top-bar></top-bar><div class="r"><side-dock></side-dock><browser-window></browser-window></div>`);

/* Text that tracks its letters so that the line takes a fixed width. */
component('fit-text', '<style>:host{display:inline-block;white-space:pre;vertical-align:top}</style><slot></slot>', el => {
  const w = +el.getAttribute('w'), n = el.textContent.length;
  if (n < 2) return;
  const natural = el.getBoundingClientRect().width;
  el.style.letterSpacing = ((w - natural) / (n - 1)).toFixed(3) + 'px';
  el.style.width = w + 'px';
});
</script>
</body>
</html>
